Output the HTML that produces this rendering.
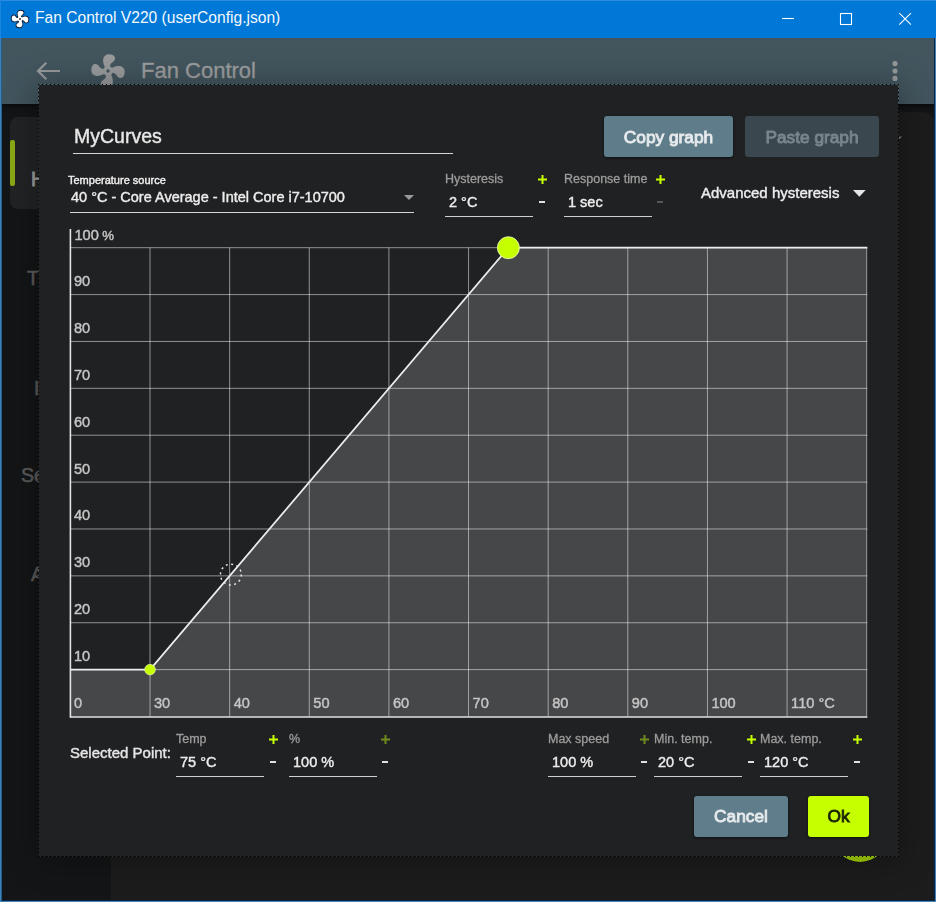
<!DOCTYPE html>
<html lang="en">
<head>
<meta charset="utf-8">
<title>Fan Control V220 (userConfig.json)</title>
<style>
*{box-sizing:border-box;margin:0;padding:0}
html,body{width:936px;height:902px;overflow:hidden;background:#0078d7}
body{font-family:"Liberation Sans",sans-serif;color:#e6e6e6;position:relative}
.abs{position:absolute}
.t{position:absolute;white-space:nowrap;line-height:1}
#titlebar{left:0;top:0;width:936px;height:38px;background:#0078d7}
#title{left:35px;top:10px;font-size:15.6px;color:#f4f8fc}
#client{left:2px;top:38px;width:932px;height:862px;background:#1b1c1d;overflow:hidden}
#appbar{left:0;top:0;width:932px;height:66px;background:linear-gradient(#43565e,#42545d);box-shadow:0 2px 5px rgba(0,0,0,.6);z-index:2}
#side{left:0;top:66px;width:109px;height:796px;background:#141516}
#main{left:109px;top:66px;width:823px;height:796px;background:#141516}
#dialog{z-index:5;left:38px;top:84px;width:861px;height:773px}
#dialog b{position:absolute;display:block;left:1px;top:1px;width:859px;height:771px;background:#202123;box-shadow:0 2px 30px 3px rgba(0,0,0,.3)}
#dialog i{position:absolute;display:block}
#dialog i.h{left:0;width:861px;height:1px;background:repeating-linear-gradient(90deg,#000 0 1px,transparent 1px 2px,rgba(255,255,255,.09) 2px 3px,transparent 3px 4px)}
#dialog i.v{top:0;height:773px;width:1px;background:repeating-linear-gradient(180deg,#000 0 1px,transparent 1px 2px,rgba(255,255,255,.09) 2px 3px,transparent 3px 4px)}
.lbl{color:#9c9c9c;font-size:12.5px;-webkit-text-stroke:0.3px #9c9c9c}
.val{color:#ededed;font-size:14.5px;-webkit-text-stroke:0.4px #ededed}
.md{-webkit-text-stroke:0.4px currentColor}
.ul{position:absolute;height:1px;background:#d0d0d0}
.plus{position:absolute}
.minus{position:absolute;width:6px;height:2px;background:#e0e0e0}
.minus.dim{background:#555}
.sb{font-size:19.5px;color:#5a5a5a;-webkit-text-stroke:0.6px currentColor}
.btn{position:absolute;border-radius:3px;text-align:center;font-weight:normal;font-size:17.3px;line-height:1;-webkit-text-stroke:0.9px currentColor}
</style>
</head>
<body>
<div id="titlebar" class="abs"><div class="abs" style="left:0;top:0;width:936px;height:1px;background:#2d8be0"></div><div class="abs" style="left:0;top:0;width:1px;height:38px;background:#1a86e0"></div>
  <svg class="abs" style="left:10px;top:9px" width="20" height="20" viewBox="0 0 24 24"><path id="fanp" d="M12,11A1,1 0 0,0 11,12A1,1 0 0,0 12,13A1,1 0 0,0 13,12A1,1 0 0,0 12,11M12.5,2C17,2 17.11,5.57 14.75,6.75C13.76,7.24 13.32,8.29 13.13,9.22C13.61,9.42 14.03,9.73 14.35,10.13C18.05,8.13 22.03,8.92 22.03,12.5C22.03,17 18.46,17.1 17.28,14.73C16.78,13.74 15.72,13.3 14.79,13.11C14.59,13.59 14.28,14 13.88,14.34C15.87,18.03 15.08,22 11.5,22C7,22 6.91,18.42 9.27,17.24C10.25,16.75 10.69,15.71 10.89,14.79C10.4,14.59 9.97,14.27 9.65,13.87C5.96,15.85 2,15.07 2,11.5C2,7 5.56,6.89 6.74,9.26C7.24,10.25 8.29,10.68 9.22,10.87C9.41,10.39 9.73,9.97 10.14,9.65C8.15,5.96 8.94,2 12.5,2Z" fill="#fff" stroke="#0c1a30" stroke-width="2.1" paint-order="stroke"/><circle cx="12" cy="12" r="1" fill="#2a2a2a"/></svg>
  <div id="title" class="t">Fan Control V220 (userConfig.json)</div>
  <svg class="abs" style="left:780px;top:10px" width="140" height="18" viewBox="0 0 140 18" fill="none" stroke="#fff" stroke-width="1.1">
    <path d="M2 8.5h12"/><rect x="60.5" y="3.5" width="11" height="11"/><path d="M119.3 3.1l11.6 11.6M130.9 3.1l-11.6 11.6"/>
  </svg>
</div>
<div id="client" class="abs">
  <div id="appbar" class="abs">
    <svg class="abs" style="left:33px;top:22px" width="26" height="22" viewBox="0 0 26 22" fill="none" stroke="#97999a" stroke-width="2.2"><path d="M25 11H3M11.3 2.7L3 11l8.3 8.3"/></svg>
    <svg class="abs" style="left:86px;top:13.2px" width="40" height="40" viewBox="0 0 24 24"><path d="M12,11A1,1 0 0,0 11,12A1,1 0 0,0 12,13A1,1 0 0,0 13,12A1,1 0 0,0 12,11M12.5,2C17,2 17.11,5.57 14.75,6.75C13.76,7.24 13.32,8.29 13.13,9.22C13.61,9.42 14.03,9.73 14.35,10.13C18.05,8.13 22.03,8.92 22.03,12.5C22.03,17 18.46,17.1 17.28,14.73C16.78,13.74 15.72,13.3 14.79,13.11C14.59,13.59 14.28,14 13.88,14.34C15.87,18.03 15.08,22 11.5,22C7,22 6.91,18.42 9.27,17.24C10.25,16.75 10.69,15.71 10.89,14.79C10.4,14.59 9.97,14.27 9.65,13.87C5.96,15.85 2,15.07 2,11.5C2,7 5.56,6.89 6.74,9.26C7.24,10.25 8.29,10.68 9.22,10.87C9.41,10.39 9.73,9.97 10.14,9.65C8.15,5.96 8.94,2 12.5,2Z" fill="#989a9b"/></svg>
    <div class="t" style="left:139px;top:22px;font-size:22px;color:#9c9d9e;-webkit-text-stroke:0.35px #9c9d9e">Fan Control</div>
    <svg class="abs" style="left:888px;top:21px" width="10" height="26" viewBox="0 0 10 26" fill="#97999a"><circle cx="5" cy="4.6" r="2.55"/><circle cx="5" cy="12" r="2.55"/><circle cx="5" cy="19.4" r="2.55"/></svg>
  </div>
  <div id="side" class="abs">
    <div class="abs" style="left:8px;top:13px;width:98px;height:92px;border-radius:8px;background:#222324"></div>
    <div class="abs" style="left:8px;top:36px;width:5px;height:46px;border-radius:2px;background:#8aa916"></div>
    <div class="t sb" style="left:29px;top:65.5px;color:#9a9a9a;-webkit-text-stroke:0.8px #9a9a9a">Home</div>
    <div class="t sb" style="left:25px;top:164.5px">Theme</div>
    <div class="t sb" style="left:32px;top:274.5px">Icons</div>
    <div class="t sb" style="left:19px;top:361.5px">Sensors</div>
    <div class="t sb" style="left:29px;top:460.5px">About</div>
  </div>
  <div id="main" class="abs">
    <div class="abs" style="left:0;top:8px;width:823px;height:800px;border-radius:0 11px 0 0;background:#1c1c1c"></div><svg class="abs" style="left:787.6px;top:31.6px" width="4" height="4" viewBox="0 0 4 4"><path d="M0 3.2L0.4 0.8L3 0.4z" fill="#9a9a9a"/></svg>
    <div class="abs" style="left:721px;top:701.5px;width:56px;height:56px;border-radius:28px;background:#a5d400"></div>
  </div>
</div>
<div id="dialog" class="abs"><b></b><i class="h" style="top:0"></i><i class="h" style="top:772px"></i><i class="v" style="left:0"></i><i class="v" style="left:860px"></i></div>
<!--DC-->
<div id="dc" class="abs" style="z-index:6;left:0;top:0;width:936px;height:902px;will-change:transform">
<div class="t md" style="left:74px;top:127px;font-size:19.5px;color:#e8e8e8">MyCurves</div>
<div class="ul" style="left:73px;top:153px;width:380px;background:#d6d6d6"></div>
<div class="btn" style="left:604px;top:116px;width:129px;height:41px;background:#5f7c8a;color:#e6eaec;padding-top:13px;box-shadow:0 1px 3px rgba(0,0,0,.6)">Copy graph</div>
<div class="btn" style="left:745px;top:116px;width:134px;height:41px;background:#3a474e;color:#7a858b;padding-top:13px">Paste graph</div>
<div class="t md" style="left:68px;top:175px;font-size:11px;color:#f0f0f0">Temperature source</div>
<div class="t val" style="left:71px;top:190px">40 °C - Core Average - Intel Core i7-10700</div>
<div class="ul" style="left:70px;top:212px;width:344px;background:#d6d6d6"></div>
<svg class="abs" style="left:404px;top:195px" width="10" height="5" viewBox="0 0 10 5"><path d="M0 0h10l-5 5z" fill="#9a9a9a"/></svg>
<div class="t lbl" style="left:445px;top:173px">Hysteresis</div><div class="t val" style="left:449px;top:195px">2 °C</div><div class="ul" style="left:445px;top:216px;width:88px"></div>
<svg class="plus" style="left:537.9px;top:174.8px" width="9" height="9" viewBox="0 0 9 9"><path d="M4.5 0v9M0 4.5h9" stroke="#c6ff00" stroke-width="2" fill="none"/></svg><div class="minus" style="left:539.4px;top:201px"></div>
<div class="t lbl" style="left:564px;top:173px">Response time</div><div class="t val" style="left:568px;top:195px">1 sec</div><div class="ul" style="left:564px;top:216px;width:88px"></div>
<svg class="plus" style="left:655.9px;top:174.8px" width="9" height="9" viewBox="0 0 9 9"><path d="M4.5 0v9M0 4.5h9" stroke="#c6ff00" stroke-width="2" fill="none"/></svg><div class="minus dim" style="left:657.4px;top:201px"></div>
<div class="t md" style="left:701px;top:185px;font-size:15px;color:#ededed">Advanced hysteresis</div>
<svg class="abs" style="left:853px;top:190px" width="13" height="7" viewBox="0 0 13 7"><path d="M0 0h12.7l-6.35 6.7z" fill="#e6e6e6"/></svg>
<svg class="abs" style="left:0;top:0" width="936" height="902" viewBox="0 0 936 902">
<polygon points="70.40,669.62 150.03,669.62 508.37,247.70 866.70,247.70 866.70,716.50 70.40,716.50" fill="#464749"/>
<path d="M150.03 247.70V716.50M229.66 247.70V716.50M309.29 247.70V716.50M388.92 247.70V716.50M468.55 247.70V716.50M548.18 247.70V716.50M627.81 247.70V716.50M707.44 247.70V716.50M787.07 247.70V716.50M866.70 247.70V716.50M70.40 669.62H867.30M70.40 622.74H867.30M70.40 575.86H867.30M70.40 528.98H867.30M70.40 482.10H867.30M70.40 435.22H867.30M70.40 388.34H867.30M70.40 341.46H867.30M70.40 294.58H867.30M70.40 247.70H867.30" stroke="rgba(255,255,255,.5)" stroke-width="1" fill="none"/>
<path d="M70.40 229V717.65" stroke="#e4e4e4" stroke-width="1.6" fill="none"/>
<path d="M70.40 716.90H867.30" stroke="#e4e4e4" stroke-width="1.5" fill="none"/>
<path d="M70.40 669.62H150.03L508.37 247.70H867.30" stroke="#eaedef" stroke-width="1.75" fill="none" stroke-linejoin="round"/>
<circle cx="230.86" cy="574.56" r="10.4" fill="none" stroke="#e6e6e6" stroke-width="1.5" stroke-dasharray="2 3.445"/>
<circle cx="150.03" cy="669.62" r="5.3" fill="#c6ff00" stroke="#e2f5a8" stroke-width="0.7"/>
<circle cx="508.37" cy="247.70" r="11" fill="#c6ff00" stroke="#ecfbc0" stroke-width="0.8"/>
<g font-family="Liberation Sans, sans-serif" font-size="14.6" fill="#c4c4c4" stroke="#c4c4c4" stroke-width="0.45">
<text x="74.5" y="239.7">100 <tspan font-size="13.2" dx="-0.6">%</tspan></text>
<text x="74" y="286.0">90</text>
<text x="74" y="332.9">80</text>
<text x="74" y="379.7">70</text>
<text x="74" y="426.6">60</text>
<text x="74" y="473.5">50</text>
<text x="74" y="520.4">40</text>
<text x="74" y="567.3">30</text>
<text x="74" y="614.1">20</text>
<text x="74" y="661.0">10</text>
<text x="74" y="708">0</text>
<text x="154.0" y="708">30</text>
<text x="233.7" y="708">40</text>
<text x="313.3" y="708">50</text>
<text x="392.9" y="708">60</text>
<text x="472.6" y="708">70</text>
<text x="552.2" y="708">80</text>
<text x="631.8" y="708">90</text>
<text x="711.4" y="708">100</text>
<text x="791.1" y="708">110 °C</text>
</g></svg>
<div class="t md" style="left:70px;top:745px;font-size:15px;color:#e6e6e6">Selected Point:</div>
<div class="t lbl" style="left:176px;top:733px">Temp</div><div class="t val" style="left:180px;top:755px">75 °C</div><div class="ul" style="left:176px;top:776px;width:88px"></div>
<svg class="plus" style="left:268.9px;top:734.8px" width="9" height="9" viewBox="0 0 9 9"><path d="M4.5 0v9M0 4.5h9" stroke="#c6ff00" stroke-width="2" fill="none"/></svg><div class="minus" style="left:270.4px;top:761px"></div>
<div class="t lbl" style="left:289px;top:733px">%</div><div class="t val" style="left:293px;top:755px">100 %</div><div class="ul" style="left:289px;top:776px;width:88px"></div>
<svg class="plus" style="left:380.9px;top:734.8px" width="9" height="9" viewBox="0 0 9 9"><path d="M4.5 0v9M0 4.5h9" stroke="#6f8c1c" stroke-width="2" fill="none"/></svg><div class="minus" style="left:382.4px;top:761px"></div>
<div class="t lbl" style="left:548px;top:733px">Max speed</div><div class="t val" style="left:552px;top:755px">100 %</div><div class="ul" style="left:548px;top:776px;width:88px"></div>
<svg class="plus" style="left:639.9px;top:734.8px" width="9" height="9" viewBox="0 0 9 9"><path d="M4.5 0v9M0 4.5h9" stroke="#6f8c1c" stroke-width="2" fill="none"/></svg><div class="minus" style="left:641.4px;top:761px"></div>
<div class="t lbl" style="left:654px;top:733px">Min. temp.</div><div class="t val" style="left:658px;top:755px">20 °C</div><div class="ul" style="left:654px;top:776px;width:88px"></div>
<svg class="plus" style="left:746.9px;top:734.8px" width="9" height="9" viewBox="0 0 9 9"><path d="M4.5 0v9M0 4.5h9" stroke="#c6ff00" stroke-width="2" fill="none"/></svg><div class="minus" style="left:748.4px;top:761px"></div>
<div class="t lbl" style="left:760px;top:733px">Max. temp.</div><div class="t val" style="left:764px;top:755px">120 °C</div><div class="ul" style="left:760px;top:776px;width:88px"></div>
<svg class="plus" style="left:852.9px;top:734.8px" width="9" height="9" viewBox="0 0 9 9"><path d="M4.5 0v9M0 4.5h9" stroke="#c6ff00" stroke-width="2" fill="none"/></svg><div class="minus" style="left:854.4px;top:761px"></div>
<div class="btn" style="left:694px;top:796px;width:94px;height:41px;background:#607d8b;color:#e6eaec;padding-top:12px;box-shadow:0 1px 3px rgba(0,0,0,.6)">Cancel</div>
<div class="btn" style="left:808px;top:796px;width:61px;height:41px;background:#c6ff00;color:#1c2400;padding-top:12px;box-shadow:0 1px 3px rgba(0,0,0,.6)">Ok</div>
</div>
<!--/DC-->
<div class="abs" style="z-index:9;left:0;top:38px;width:936px;height:864px;pointer-events:none;border-left:1px solid #3f82b8;border-right:1px solid #4a82b4;border-bottom:1px solid #4a82b4"><div class="abs" style="left:0;top:0;width:934px;height:863px;border-left:1px solid #225f90;border-right:1px solid #02244a;border-bottom:1px solid #02244a"></div></div>
</body>
</html>
